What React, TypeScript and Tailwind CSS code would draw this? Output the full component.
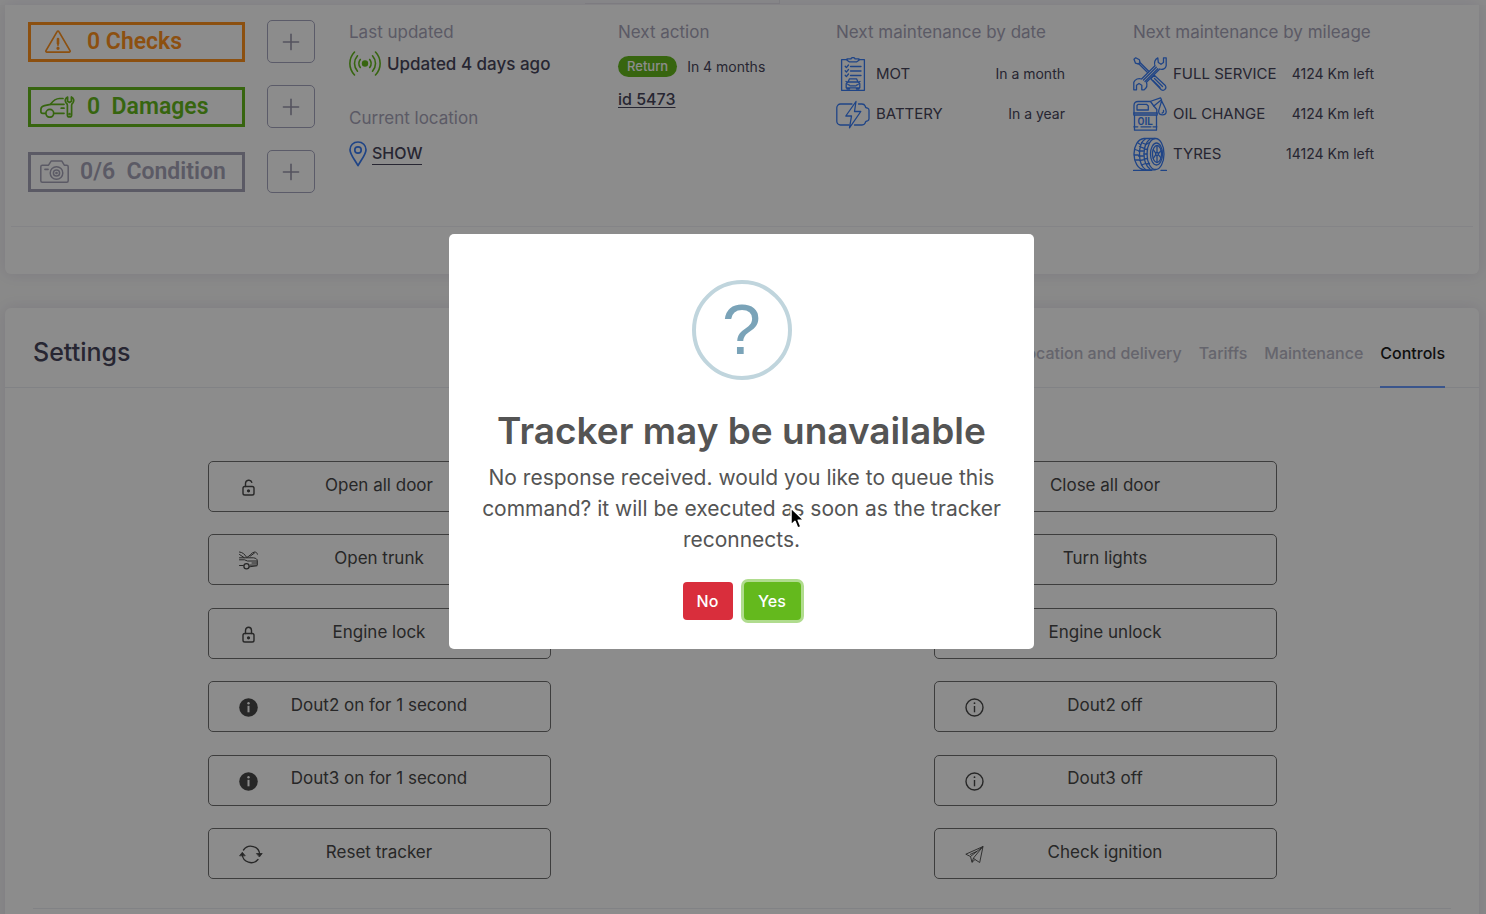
import type { ReactNode } from 'react';
import { Plus } from 'lucide-react';

interface MaintenanceItem {
  icon: ReactNode;
  name: string;
  left: string;
}

interface Command {
  icon: ReactNode;
  label: string;
}

const WarningIcon = () => (
  <svg width="26" height="23" viewBox="0 0 26 23" fill="none" stroke="currentColor" strokeWidth="1.7" strokeLinejoin="round" strokeLinecap="round">
    <path d="M12.1 1.6a1 1 0 0 1 1.8 0L25 20.6a1 1 0 0 1-.9 1.5H1.9A1 1 0 0 1 1 20.6Z" />
    <path d="M13 9v4.5" strokeWidth="2.6" />
    <path d="M13 14.5v1.2" strokeWidth="1.4" />
    <circle cx="13" cy="18.3" r="0.8" fill="currentColor" />
  </svg>
);

const CarRepairIcon = () => (
  <svg width="35" height="22" viewBox="0 0 35 22" fill="none" stroke="currentColor" strokeWidth="1.7" strokeLinejoin="round" strokeLinecap="round">
    <path d="M23 2.5h-3.5c-4 0-6 1.700-9 5.800L4.500 9.600C2 10.200.9 11.500.9 13.500v2.200c0 1 .6 1.600 1.800 1.600h2.600M14.500 17.300h9.500" />
    <path d="M10.500 8.300H24M21.200 12.200H24" />
    <circle cx="9.800" cy="17.300" r="3.900" />
    <path d="M27.600 1c-2.300 1-3 3.800-1.600 5.700.9 1 1.400 1.300 1.400 2.500v9.700c0 2.700 4.200 2.700 4.200 0V9.200c0-1.200.5-1.500 1.400-2.500 1.400-1.900.7-4.700-1.600-5.700v4.300l-1.900 1.100-1.900-1.100Z" />
    <circle cx="29.500" cy="18.200" r="0.500" fill="currentColor" />
  </svg>
);

const CameraIcon = () => (
  <svg width="29" height="23" viewBox="0 0 29 23" fill="none" stroke="currentColor" strokeWidth="1.5" strokeLinejoin="round" strokeLinecap="round">
    <path d="M2.300 5.200h6.200L11.300.9h10.400l2.600 4.300h2.400c.9 0 1.500.6 1.500 1.500v14c0 .9-.6 1.500-1.500 1.500H2.300c-.9 0-1.500-.6-1.500-1.500v-14c0-.9.6-1.500 1.500-1.500Z" />
    <path d="M5 9.300h3" strokeWidth="1.800" />
    <circle cx="16.500" cy="13" r="6.300" />
    <circle cx="16.500" cy="13" r="3.100" />
    <circle cx="16.500" cy="13" r="0.600" />
  </svg>
);

const SignalIcon = () => (
  <svg width="32" height="25" viewBox="0 0 32 25" fill="none" stroke="currentColor" strokeWidth="1.600" strokeLinecap="round">
    <circle cx="16" cy="12.500" r="3.200" fill="currentColor" stroke="none" />
    <path d="M11.300 8.500c-1.800 2.400-1.800 5.600 0 8M20.700 8.500c1.800 2.400 1.800 5.600 0 8" />
    <path d="M8.500 4.800c-4 4.600-4 10.800 0 15.400M23.500 4.800c4 4.600 4 10.800 0 15.400" />
    <path d="M5.500 1C-.7 7.700-.7 17.300 5.500 24M26.500 1c6.200 6.700 6.200 16.300 0 23" />
  </svg>
);

const PinIcon = () => (
  <svg width="18" height="26" viewBox="0 0 18 26" fill="none" stroke="currentColor" strokeWidth="1.700" strokeLinejoin="round">
    <path d="M9 1C4.300 1 1 4.400 1 8.700c0 4.600 4.600 9.800 8 16 3.400-6.200 8-11.400 8-16C17 4.400 13.700 1 9 1Z" />
    <circle cx="9" cy="9" r="3.200" />
  </svg>
);

const ClipboardIcon = () => (
  <svg width="34" height="34" viewBox="0 0 34 34" fill="none" stroke="currentColor" strokeWidth="1.300" strokeLinejoin="round" strokeLinecap="round">
    <path d="M11 2.700H5.600V33.300h22.800V2.700H23" />
    <path d="M11 1.800h4c.3-1.600 3.700-1.600 4 0h4v1.500l-2.200 1.500h-7.600L11 3.300Z" />
    <path d="M14.500 9.500H25M14.500 14H25M14.500 18.500H25" />
    <path d="m9.200 9.300 1.200 1.300L12.500 8M9.200 13.800l1.200 1.300 2.100-2.600M9.200 18.300l1.200 1.300 2.100-2.600" />
    <path d="m12 25 1.500-3.200h7L22 25M12 25h10l1.800 1.800v4h-13.600v-4ZM11 30.800v1.200h2.500v-1.200M20.500 30.800v1.200H23v-1.200M14 28.800h6M11.800 27.500l1.500.6M22.200 27.500l-1.500.6M10 24.500l1.700.8M24 24.500l-1.700.8" />
  </svg>
);

const BatteryIcon = () => (
  <svg width="34" height="34" viewBox="0 0 34 34" fill="none" stroke="currentColor" strokeWidth="1.300" strokeLinejoin="round" strokeLinecap="round">
    <path d="M16 7H4.500C2.500 7 .8 8.700.8 10.700v13.600c0 2 1.700 3.700 3.700 3.700H13M22.500 7H26c1.500 0 2.600.7 3.200 2 0 1.500.7 2 2.300 2.200.9.300 1.500 1 1.500 2v8.600c0 1-.6 1.700-1.500 2-1.600.2-2.300.7-2.300 2.200-.6 1.300-1.700 2-3.200 2h-7.500" />
    <path d="M20 4.500 9.800 19h5.700l-2 11.800L24.800 14.500h-6.300Z" />
  </svg>
);

const ServiceIcon = () => (
  <svg width="34" height="34" viewBox="0 0 34 34" fill="none" stroke="currentColor" strokeWidth="1.300" strokeLinejoin="round" strokeLinecap="round">
    <path d="M24.800.8c-3 1.500-4 5-2.800 7.900L8.600 22C5.700 20.900 2 22 .8 25.300v7.500h2.700v-4.500L6 26.500l2.800 1.800v4.500h2.400c2.500-1.900 3.200-5 2.200-7.500L26.700 12c2.800 1 6.100-.3 6.500-3.400V.8h-2.700v4.700L28 7.300l-2.700-1.800Z" />
    <path d="m10.500 23 12.800-12.800M12 24.500 24.800 11.700" />
    <path d="M1 2.200 2.700.8l3.700 2 .8 3L5.500 7l-3-.8ZM6.500 5l9 9M5.500 6.500l8.800 8.800" />
    <path d="m18.500 21 2.800-2.800 11 10.300c1.800 3-1.300 6-4 4.200L18 22ZM21.500 21.500l8 8M20 23.500l7 7" />
  </svg>
);

const OilIcon = () => (
  <svg width="34" height="34" viewBox="0 0 34 34" fill="none" stroke="currentColor" strokeWidth="1.300" strokeLinejoin="round" strokeLinecap="round">
    <path d="M1 16V8.500C1 6 2.500 4.500 5 4.500h12L27.500.8l1 2L20.800 9l3 3.500V16" />
    <path d="M5 7.300h8.500l1.800 1.700v4H4V8.500ZM17.500 4.500l3.300 4.500" />
    <path d="M.8 16h23.400v2H.8ZM1.500 18v15.200h22V18M.8 29.800h4M8 29.800h10M20 29.800h4" />
    <path d="M28.500 3.500c1.800 4.500 4.700 8 4.700 11 0 4.500-7.500 4.500-7.500 0 0-3 2.300-6.500 2.800-11ZM30.500 13.500c.3 1.500-.4 2.300-1.300 2.500" />
    <text x="4.500" y="27.500" fontSize="10" fontWeight="600" fill="currentColor" stroke="none" fontFamily="Roboto, sans-serif">OIL</text>
  </svg>
);

const TyreIcon = () => (
  <svg width="34" height="34" viewBox="0 0 34 34" fill="none" stroke="currentColor" strokeWidth="1.300" strokeLinejoin="round" strokeLinecap="round">
    <ellipse cx="22.500" cy="17" rx="8.500" ry="15.500" />
    <ellipse cx="23.500" cy="17" rx="6" ry="11" />
    <ellipse cx="24" cy="17" rx="4.500" ry="8.500" />
    <circle cx="24" cy="17" r="1.500" />
    <path d="M24 15.500V9M24 18.500V25M25.500 16.500l2.800-3M25.500 17.800l2.500 3M22.700 16.200l-2.500-3.500M22.700 17.800l-2.500 3.500" />
    <path d="M22 1.500H11C5 2 1 9 1 17s4 15.200 10 15.800h11" />
    <path d="M12.500 1.800C4.500 7 4.500 27 12.500 32.500M17 2c-8 6-8 24 0 30" />
    <path d="M8.500 5.500 13 7.500M6.500 9.500l4.800 1.800M5.500 14h5M5.500 19h5M6.500 23.500l5-.8M8.500 28l4-1.500M2 12.500l3 1M1.300 18h4M2.500 23h3.500M5 6l2.500 1.500M13 7.500l3.500-2M11.500 12l3 .5M11 17h3M11.300 22l3.200-.5M13.500 27l3-.5" />
    <path d="M.6 33.400h18M28 33.400h5.400" />
  </svg>
);

const LockIcon = ({ open = false }: { open?: boolean }) => (
  <svg width="19" height="19" viewBox="0 0 19 19" fill="none" stroke="currentColor" strokeWidth="1.400" strokeLinecap="round">
    <rect x="4" y="8.500" width="11" height="8.500" rx="1.800" />
    {open ? <path d="M6.500 8.500V5.500c0-4 5.500-4.300 6.300-1.200" /> : <path d="M6.500 8.500V5.500c0-4.300 6-4.300 6 0v3" />}
    <circle cx="9.500" cy="12.800" r="0.900" fill="currentColor" />
  </svg>
);

const TrunkIcon = () => (
  <svg width="19" height="19" viewBox="0 0 19 19" fill="none" stroke="currentColor" strokeWidth="1" strokeLinecap="round" strokeLinejoin="round">
    <path d="M.5 1c3 .3 5 2 7.300 5.500C11 5 12.500 1.500 15.500 1c1.700 0 2.700 1 2.900 2.200M.5 3.500l4.500 3M11 5.300 15.500 2" />
    <path d="M.5 6.800h14c2.500.4 3.800 1.400 3.800 2.800v4.500h-7M.5 8.800h5l3 1.200h9.500M13 12h5M.5 14.500h3.800M10.500 15.800l7.500-1" />
    <circle cx="7.500" cy="15.300" r="2.600" strokeWidth="1.300" />
  </svg>
);

const InfoFilledIcon = () => (
  <svg width="19" height="19" viewBox="0 0 19 19" fill="currentColor">
    <circle cx="9.500" cy="9.500" r="9.300" />
    <circle cx="9.500" cy="5.300" r="1.200" fill="#fff" />
    <path d="M8.500 7.800h2v6.500h-2Z" fill="#fff" />
  </svg>
);

const InfoIcon = () => (
  <svg width="19" height="19" viewBox="0 0 19 19" fill="none" stroke="currentColor" strokeWidth="1.400">
    <circle cx="9.500" cy="9.500" r="8.500" />
    <path d="M9.500 8v6.300" />
    <circle cx="9.500" cy="5.200" r="0.900" fill="currentColor" stroke="none" />
  </svg>
);

const ResetIcon = () => (
  <svg width="24" height="19" viewBox="0 0 24 19" fill="none" stroke="currentColor" strokeWidth="1.300" strokeLinecap="round">
    <path d="M4.500 5A9 9 0 0 1 20.800 9.500M19 14.500A9 9 0 0 1 3.200 9.500" />
    <path d="m.8 10.500 2.500-3.200 2.700 3.200ZM17.800 8.500h5.400l-2.600 3.200Z" fill="currentColor" strokeWidth="0.800" strokeLinejoin="round" />
  </svg>
);

const PlaneIcon = () => (
  <svg width="19" height="19" viewBox="0 0 19 19" fill="none" stroke="currentColor" strokeWidth="0.900" strokeLinejoin="round">
    <path d="M18 1.500.8 9.200l4.700 2.300 1.500 5.800 3-2.800 4.700 3Z" />
    <path d="M18 1.500 5.500 11.500M18 1.500 8.500 13l1.500 1.500M8.500 13 7 17.300M5 9.500l7-3.200" />
  </svg>
);

const byDate: MaintenanceItem[] = [
  { icon: <ClipboardIcon />, name: 'MOT', left: 'In a month' },
  { icon: <BatteryIcon />, name: 'BATTERY', left: 'In a year' },
];

const byMileage: MaintenanceItem[] = [
  { icon: <ServiceIcon />, name: 'FULL SERVICE', left: '4124 Km left' },
  { icon: <OilIcon />, name: 'OIL CHANGE', left: '4124 Km left' },
  { icon: <TyreIcon />, name: 'TYRES', left: '14124 Km left' },
];

const commands: Command[] = [
  { icon: <LockIcon open />, label: 'Open all door' },
  { icon: <LockIcon />, label: 'Close all door' },
  { icon: <TrunkIcon />, label: 'Open trunk' },
  { icon: <InfoIcon />, label: 'Turn lights' },
  { icon: <LockIcon />, label: 'Engine lock' },
  { icon: <LockIcon open />, label: 'Engine unlock' },
  { icon: <InfoFilledIcon />, label: 'Dout2 on for 1 second' },
  { icon: <InfoIcon />, label: 'Dout2 off' },
  { icon: <InfoFilledIcon />, label: 'Dout3 on for 1 second' },
  { icon: <InfoIcon />, label: 'Dout3 off' },
  { icon: <ResetIcon />, label: 'Reset tracker' },
  { icon: <PlaneIcon />, label: 'Check ignition' },
];

const tabs = ['Location and delivery', 'Tariffs', 'Maintenance', 'Controls'];

function AddButton({ label }: { label: string }) {
  return (
    <button aria-label={label} className="flex h-[43px] w-12 items-center justify-center rounded-[5px] border border-[#a7a7bf] text-[#9a98ad]">
      <Plus size={26} strokeWidth={1.5} />
    </button>
  );
}

function MaintenanceList({ title, items, className }: { title: string; items: MaintenanceItem[]; className: string }) {
  return (
    <div>
      <h4 className="text-[17px] leading-6 whitespace-nowrap text-[#a7a5b9]">{title}</h4>
      <ul className={className}>
        {items.map((item) => (
          <li key={item.name} className="flex h-10 items-center gap-[6px] whitespace-nowrap">
            <span className="text-[#3a7df5]">{item.icon}</span>
            <span className="text-[15px]">{item.name}</span>
            <span className="ml-auto text-sm">{item.left}</span>
          </li>
        ))}
      </ul>
    </div>
  );
}

function VehicleSummary() {
  return (
    <section className="rounded-b-md bg-white px-[6px] shadow-[0_0_16px_rgba(82,63,155,0.14)]">
      <div className="grid h-[222px] grid-cols-[321fr_269fr_218fr_297fr_320fr] border-b border-[#f0f0f6] pt-[15px] pr-5 pl-[17px] text-[#48465b]">
        <div className="flex flex-col gap-[22px] font-[Roboto] text-[23px] leading-6 font-semibold">
          <div className="flex items-center gap-[22px]">
            <a href="#checks" className="flex h-10 w-[217px] items-center border-[3px] border-[#ff921e] pl-[14px] text-[#ff921e]">
              <WarningIcon />
              <span className="ml-4">0 Checks</span>
            </a>
            <AddButton label="Add check" />
          </div>
          <div className="flex items-center gap-[22px]">
            <a href="#damages" className="flex h-10 w-[217px] items-center border-[3px] border-[#64b91d] pl-[9px] text-[#64b91d]">
              <CarRepairIcon />
              <span className="ml-3 whitespace-pre">0  Damages</span>
            </a>
            <AddButton label="Add damage" />
          </div>
          <div className="flex items-center gap-[22px]">
            <a href="#condition" className="flex h-10 w-[217px] items-center border-[3px] border-[#a7a5b9] pl-[9px] text-[#a7a5b9]">
              <CameraIcon />
              <span className="ml-[11px] whitespace-pre">0/6  Condition</span>
            </a>
            <AddButton label="Add condition photo" />
          </div>
        </div>

        <div>
          <h4 className="text-[17px] leading-6 text-[#a7a5b9]">Last updated</h4>
          <p className="mt-[7px] flex items-center gap-[6px] text-[17px] leading-6 font-medium whitespace-nowrap">
            <span className="text-[#64b91d]"><SignalIcon /></span>
            Updated 4 days ago
          </p>
          <h4 className="mt-[30px] text-[17px] leading-6 text-[#a7a5b9]">Current location</h4>
          <p className="mt-[11px] flex items-center gap-[5px]">
            <span className="text-[#3a7df5]"><PinIcon /></span>
            <a href="#map" className="border-b border-[#48465b] text-base leading-[21px] font-medium">SHOW</a>
          </p>
        </div>

        <div>
          <h4 className="text-[17px] leading-6 text-[#a7a5b9]">Next action</h4>
          <p className="mt-3 flex items-center gap-[10px] text-sm leading-[21px] whitespace-nowrap">
            <span className="rounded-full bg-[#64b91d] px-[9px] text-[13px] font-medium text-white">Return</span>
            In 4 months
          </p>
          <a href="#booking" className="mt-[10px] inline-block text-base leading-6 font-medium underline underline-offset-2">id 5473</a>
        </div>

        <MaintenanceList title="Next maintenance by date" items={byDate} className="mt-[10px] w-[229px]" />
        <MaintenanceList title="Next maintenance by mileage" items={byMileage} className="mt-[10px] w-[241px]" />
      </div>
      <div className="h-[47px]" />
    </section>
  );
}

function Settings() {
  return (
    <section className="mt-[34px] rounded-md bg-white shadow-[0_0_16px_rgba(82,63,155,0.14)]">
      <header className="flex h-20 items-center justify-between border-b border-[#ebedf2] pr-[34px] pl-7">
        <h3 className="pt-2 text-[25px] leading-8 font-medium text-[#48465b]">Settings</h3>
        <nav className="flex h-20 gap-[17px]">
          {tabs.map((tab) => (
            <a
              key={tab}
              href="#settings"
              className={
                tab === 'Controls'
                  ? 'flex items-center border-b-2 border-[#6b9bff] pt-3 text-base font-medium text-[#1c1c1c]'
                  : 'flex items-center border-b-2 border-transparent pt-3 text-base font-medium text-[#b9b8c6]'
              }
            >
              {tab}
            </a>
          ))}
        </nav>
      </header>
      <div className="px-[11px] pt-[73px]">
        <div className="grid h-[418px] grid-cols-2 content-between justify-items-center">
          {commands.map((command) => (
            <button
              key={command.label}
              className="grid h-[51px] w-[343px] max-w-full grid-cols-[1fr_auto_1fr] items-center rounded-[5px] border border-[#707070] px-[30px] pb-[2px] text-[17px] text-[#484848]"
            >
              <span className="pt-1">{command.icon}</span>
              {command.label}
            </button>
          ))}
        </div>
      </div>
      <footer className="mx-7 mt-[29px] h-20 border-t border-[#ebedf2]" />
    </section>
  );
}

function TrackerDialog() {
  return (
    <div className="fixed inset-0 flex items-center justify-center bg-black/45 pr-[3px] pb-[31px]">
      <div role="dialog" aria-modal="true" aria-labelledby="dialog-title" className="flex w-[585px] flex-col items-center rounded-[5px] bg-white px-5 pt-[46px] pb-[29px] text-center text-[#545454]">
        <div className="flex size-[100px] items-center justify-center rounded-full border-4 border-[#c0d5dd] font-['Liberation_Sans',sans-serif] text-[70px] leading-none text-[#7aa3b8]">?</div>
        <h2 id="dialog-title" className="mt-6 text-[37px] leading-[54px] font-semibold whitespace-nowrap">Tracker may be unavailable</h2>
        <p className="mt-1 text-[21px] leading-[31px]">
          No response received. would you like to queue this command? it will be executed as soon as the tracker reconnects.
        </p>
        <div className="mt-[27px] flex gap-[11px] text-base font-medium text-white">
          <button className="h-[38px] w-[50px] rounded bg-[#d92e3c]">No</button>
          <button className="h-[38px] w-[57px] rounded bg-[#64b91d] ring-3 ring-[#b0dc8e]">Yes</button>
        </div>
      </div>
    </div>
  );
}

export default function App() {
  return (
    <div className="h-screen overflow-hidden bg-[#fafaf9] font-[Inter,sans-serif] text-[#48465b]">
      <div className="h-[5px] bg-[#fcfcfc]">
        <div className="ml-[585px] h-1 w-[195px] border-r border-b border-[#ececf0]" />
      </div>
      <main className="pr-[7px] pl-[5px]">
        <VehicleSummary />
        <Settings />
      </main>
      <TrackerDialog />
      {/* mouse pointer */}
      <svg className="fixed top-[506px] left-[789px]" width="17" height="26" viewBox="0 0 17 26">
        <path d="M2 2v17l4-3.600L8.700 22l3.200-1.400L9.200 14.300h5.600Z" fill="#000" stroke="#fff" strokeWidth="1.500" strokeLinejoin="round" />
      </svg>
    </div>
  );
}
